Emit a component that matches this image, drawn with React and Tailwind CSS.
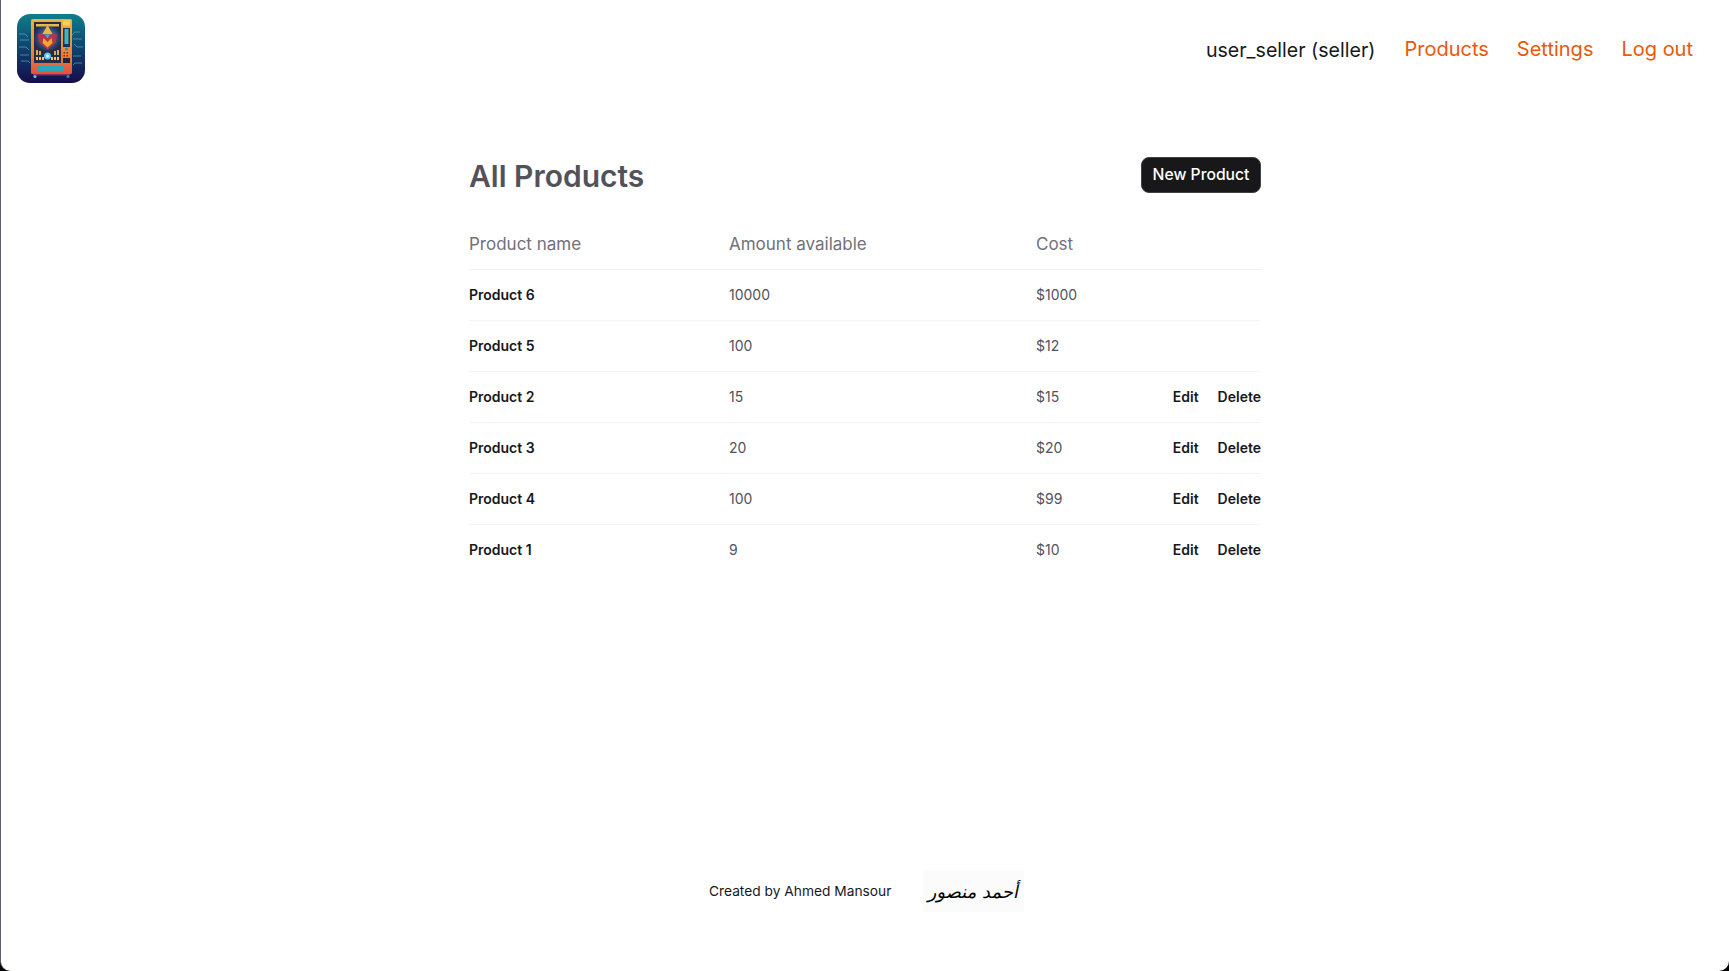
const products = [
  { name: "Product 6", amount: "10000", cost: "$1000", own: false },
  { name: "Product 5", amount: "100", cost: "$12", own: false },
  { name: "Product 2", amount: "15", cost: "$15", own: true },
  { name: "Product 3", amount: "20", cost: "$20", own: true },
  { name: "Product 4", amount: "100", cost: "$99", own: true },
  { name: "Product 1", amount: "9", cost: "$10", own: true },
];

const Logo = () => (
  <svg viewBox="0 0 68 69" className="h-[69px] w-[68px]">
    <defs>
      <linearGradient id="logoBg" x1="0" y1="0" x2="0" y2="1">
        <stop offset="0%" stopColor="#0d7f8c" />
        <stop offset="40%" stopColor="#0e4d72" />
        <stop offset="100%" stopColor="#150d4a" />
      </linearGradient>
      <linearGradient id="logoFrame" x1="0" y1="0" x2="0" y2="1">
        <stop offset="0%" stopColor="#eeb23a" />
        <stop offset="55%" stopColor="#ee8a36" />
        <stop offset="100%" stopColor="#e2533f" />
      </linearGradient>
      <radialGradient id="logoGlow" cx="0.5" cy="0.5" r="0.5">
        <stop offset="0%" stopColor="#6fd0ff" stopOpacity="0.9" />
        <stop offset="100%" stopColor="#2f6fc0" stopOpacity="0.15" />
      </radialGradient>
    </defs>
    <rect width="68" height="69" rx="13" fill="url(#logoBg)" />
    <path d="M2 20h6l3 3M3 26h9M2 33h7l3 3M3 41h9M4 47h7l2 2M63 18h-5l-3 3M65 25h-9M66 33h-6l-3-3M64 42h-8M65 49h-7l-2 2" stroke="#5aa8bd" strokeWidth="0.7" fill="none" />
    <rect x="14" y="5" width="41" height="55" rx="1.500" fill="url(#logoFrame)" />
    <rect x="17" y="8" width="27" height="41" fill="#262b4b" />
    <rect x="19" y="10" width="23" height="2.500" fill="#e9b949" />
    <rect x="46" y="14" width="7" height="19" fill="#14365c" />
    <rect x="47.500" y="15" width="4" height="15" fill="#3fb4c4" />
    <rect x="46" y="6.500" width="7" height="5" fill="#f5cf5c" />
    <circle cx="49.500" cy="35" r="1.500" fill="#2d8fa8" />
    <path d="M46.500 38h1.500v1.500h-1.500zM49.500 38h1.500v1.500h-1.500zM46.500 41h1.500v1.500h-1.500zM49.500 41h1.500v1.500h-1.500z" fill="#7a2f1d" />
    <rect x="46" y="44" width="7" height="5" fill="#1b2440" />
    <ellipse cx="30.500" cy="24" rx="13" ry="13" fill="url(#logoGlow)" />
    <path d="M30.500 11l5 9h-10z" fill="#f4b63a" />
    <path d="M21 20c5-1 7 1 9.500 4 2.500-3 4.500-5 9.500-4l-1 8-8.500 8-8.500-8z" fill="#b5344a" />
    <path d="M26.500 24l4 4 4-4 1 5-5 4.500-5-4.500z" fill="#f2a33a" />
    <path d="M19 36h2v5h-2zM22 37h2v4h-2zM37 37h2v4h-2zM40 36h2v5h-2z" fill="#e3a73f" />
    <path d="M19 43h2v3h-2zM22 43h2v3h-2zM25 43h2v3h-2zM34 43h2v3h-2zM37 43h2v3h-2zM40 43h2v3h-2z" fill="#f2c94c" />
    <circle cx="30.500" cy="42" r="3.500" fill="#5fc8f0" />
    <circle cx="30.500" cy="42" r="1.500" fill="#d8f4ff" />
    <rect x="20" y="52" width="26" height="5" fill="#2aa7b4" />
    <rect x="16" y="60" width="37" height="1.500" fill="#8a2a5c" />
    <circle cx="18" cy="62.500" r="1.500" fill="#5fc8f0" />
    <circle cx="51" cy="62.500" r="1.500" fill="#2d8fa8" />
  </svg>
);

export default function App() {
  return (
    <div className="h-[971px] overflow-hidden bg-black font-['Inter',sans-serif]">
      <div className="flex h-full flex-col rounded-b-[10px] border-l border-[#5d5d70] bg-white">
        <header className="flex items-start justify-between pt-[14px] pl-4 pr-[36px]">
          <Logo />
          <nav className="mt-5 flex items-center text-[20px] leading-7">
            <span className="mt-0.5 text-[19.6px] text-[#18181b]">user_seller (seller)</span>
            <a className="ml-[29px] text-[#ea580c]">Products</a>
            <a className="ml-[28px] text-[#ea580c]">Settings</a>
            <a className="ml-[28px] text-[#ea580c]">Log out</a>
          </nav>
        </header>

        <main className="mt-[74px] ml-[468px] w-[792px]">
          <div className="flex items-center justify-between">
            <h1 className="h-9 pt-px text-[30px] leading-9 font-semibold text-[#52525b]">All Products</h1>
            <button className="h-9 w-[120px] rounded-lg border border-[#3f3f46] bg-[#18181b] text-[15.7px] font-medium text-white">
              New Product
            </button>
          </div>
          <table className="mt-7 w-full table-fixed text-left">
            <thead>
              <tr className="h-[48px] border-b border-[#f0f0f1] text-[17px] text-[#71717a] [&>th]:font-normal">
                <th className="w-[260px]">Product name</th>
                <th className="w-[307px]">Amount available</th>
                <th className="w-[100px]">Cost</th>
                <th></th>
              </tr>
            </thead>
            <tbody>
              {products.map((p, i) => (
                <tr key={p.name} className={`h-[51px] text-sm ${i < products.length - 1 ? "border-b border-[#f4f4f5]" : ""}`}>
                  <td className="font-semibold text-[#18181b]">{p.name}</td>
                  <td className="text-[#52525b]">{p.amount}</td>
                  <td className="text-[#52525b]">{p.cost}</td>
                  <td className="text-right font-semibold text-[#18181b]">
                    {p.own && (
                      <>
                        <a>Edit</a>
                        <a className="ml-[19px]">Delete</a>
                      </>
                    )}
                  </td>
                </tr>
              ))}
            </tbody>
          </table>
        </main>

        <footer className="mt-[296px] ml-[708px] flex items-center text-[13.750px] text-[#18181b]">
          <span>Created by Ahmed Mansour</span>
          <div className="ml-[32px] flex h-[41px] w-[101px] items-center justify-center bg-[#fbfbfb]">
            <span dir="rtl" className="-skew-x-12 font-['DejaVu_Sans',sans-serif] text-[18px] leading-none text-black">أحمد منصور</span>
          </div>
        </footer>
      </div>
    </div>
  );
}
